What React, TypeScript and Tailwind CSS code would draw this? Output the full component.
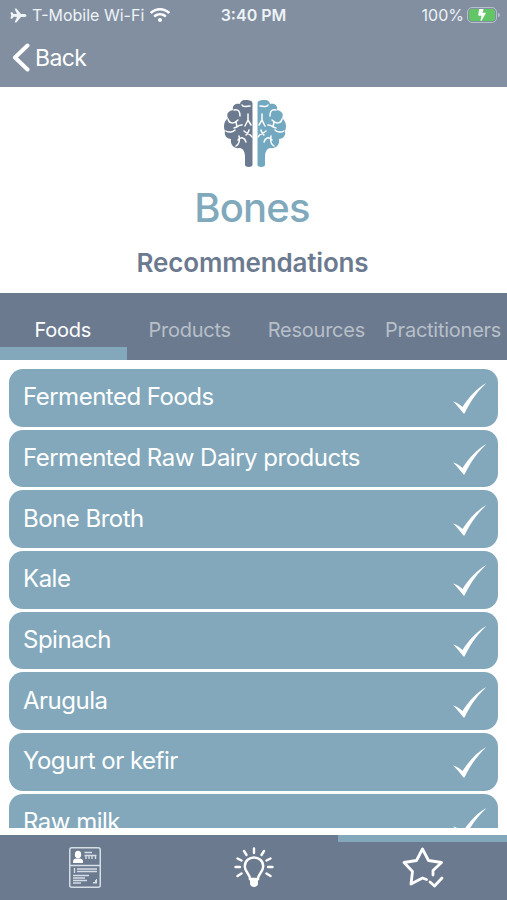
import { FaBolt, FaWifi } from "react-icons/fa";
import { IoAirplane } from "react-icons/io5";

const tabs = [
  { name: "Foods", active: true },
  { name: "Products", active: false },
  { name: "Resources", active: false },
  { name: "Practitioners", active: false },
];

const foods = [
  "Fermented Foods",
  "Fermented Raw Dairy products",
  "Bone Broth",
  "Kale",
  "Spinach",
  "Arugula",
  "Yogurt or kefir",
  "Raw milk",
];

const BrainHalf = () => (
  <>
    <path
      fill="currentColor"
      d="M28.500 3C28 0 24 0 21 0C18 0 16 2 16 4C11 3 8 6 9 10C4 11 2 14 4 18C0 21-1 27 1 31C0 36 3 39 7 39C6 45 10 49 16 48C20 49 21 53 21 57V65C21 67.500 28.500 67.500 28.500 65Z"
    />
    <path
      fill="none"
      stroke="white"
      strokeWidth="1.500"
      strokeLinecap="round"
      d="M18 5C19 8 23 6 26 6M10 10C15 9 16 12 16 16M4 19C5 24 10 24 14 20M10 28C13 28 15 24 18 25M12 22L13 27M2 31C5 33 9 32 11 30M24 14V20L21 26M24 20L27 25M28 37C26 33 23 34 20 31M22 35C24 34 24 33 25 30M14 40C17 36 21 38 22 42M12 46C15 44 16 40 15 36"
    />
  </>
);

const Brain = () => (
  <svg viewBox="0 0 62 67" className="h-[67px] w-[62px]">
    <g className="text-[#6c7a90]">
      <BrainHalf />
    </g>
    <g className="text-[#72a8c0]" transform="translate(62 0) scale(-1 1)">
      <BrainHalf />
    </g>
  </svg>
);

const Check = () => (
  <svg viewBox="0 0 34 32" className="mt-[3px] h-8 w-[34px]" fill="white">
    <path d="M0 18.500C3 19 7 21.500 9.500 24C16 14 24 5 33.500 0C25 8 18 17 11.500 30.500H10.500C7 26 4 22 0 18.500Z" />
  </svg>
);

const Article = () => (
  <svg viewBox="0 0 32 41" className="h-[41px] w-8" fill="none" stroke="#d5dde5">
    <rect x=".75" y=".75" width="30.5" height="39.500" rx="2" strokeWidth="1.500" />
    <path d="M1 18.500H31" strokeWidth="1.500" />
    <ellipse cx="9" cy="7.500" rx="3.200" ry="3.800" fill="white" stroke="none" />
    <path d="M4 16V14.500C4 12 6 11.500 9 11.500S14 12 14 14.500V16Z" fill="white" stroke="none" />
    <path d="M15.500 5.500H23M15.500 8.500H27.500M17 9V12M20 9V12M23 9V12M26.500 9V12M5.500 21V26M8 22H28M8 24.500H28M4 28.500H20M4 31H16M4 33.500H18M4 36H12" strokeWidth="1.400" />
    <path d="M28 32V36.500H24V35H26V33H27V32Z" fill="#d5dde5" stroke="none" />
  </svg>
);

const Bulb = () => (
  <svg viewBox="0 0 40 41" className="h-[41px] w-10" fill="none" stroke="white" strokeWidth="2.400" strokeLinecap="round">
    <path d="M16 32C16 27 10.800 25 10.800 19.500C10.800 7.500 29.200 7.500 29.200 19.500C29.200 25 24 27 24 32Z" />
    <path d="M16 32H24V37C24 38 22 40 20 40S16 38 16 37Z" fill="white" stroke="none" />
    <path d="M20 1.500V6M10 4L12.500 8M30 4L27.500 8M3.500 11.500L7.500 13.500M36.500 11.500L32.500 13.500M1.500 20H6M34 20H38.500M3.500 29L7.500 26.500M36.500 29L32.500 26.500" />
  </svg>
);

const Star = () => (
  <svg viewBox="0 0 42 41" className="h-[41px] w-[42px]" fill="none" stroke="white" strokeWidth="2.800" strokeLinejoin="round" strokeLinecap="round">
    <path d="M24.500 32.500L20.500 31L9 37L10.500 24.500L2 15.500L14.500 13.500L20.500 2L26.500 13.500L39.500 15.500L31 23.500V28" />
    <path d="M28 35L32.500 39L40 31" />
  </svg>
);

export default function App() {
  return (
    <div className="flex h-[900px] w-[507px] flex-col overflow-hidden bg-white font-[Inter,sans-serif]">
      <header className="h-[87px] shrink-0 bg-[#828fa1] text-white">
        <div className="grid h-[30px] grid-cols-3 items-center pr-[7px] pl-[10px] text-[16px] text-[#edf3f7]">
          <div className="flex items-center gap-[6px] whitespace-nowrap">
            <IoAirplane className="size-[17px]" />
            <span className="-ml-px">T-Mobile Wi-Fi</span>
            <FaWifi className="size-5 text-white" />
          </div>
          <span className="-ml-[3px] text-center font-semibold">3:40 PM</span>
          <div className="flex items-center justify-end gap-[3px]">
            <span>100%</span>
            <div className="flex items-center gap-px">
              <div className="flex h-[16px] w-[30px] rounded-[5px] border border-[#b6bfca] p-px">
                <div className="flex flex-1 items-center justify-center rounded-[3px] bg-[#63c666]">
                  <FaBolt className="size-3 text-white" />
                </div>
              </div>
              <div className="h-1 w-[2px] rounded-r bg-[#b6bfca]" />
            </div>
          </div>
        </div>
        <button className="flex h-[55px] items-center gap-[5px] pl-[12px] text-[23px] tracking-[-.6px]">
          <svg viewBox="0 0 18 29" className="h-[29px] w-[18px]" fill="none" stroke="white" strokeWidth="4" strokeLinecap="round" strokeLinejoin="round">
            <path d="M15.500 2.500L3 14.500L15.500 26.500" />
          </svg>
          <span className="pt-px">Back</span>
        </button>
      </header>

      <section className="flex h-[206px] shrink-0 flex-col items-center pt-[13px]">
        <div className="pl-[3px]">
          <Brain />
        </div>
        <h1 className="mt-[17px] pr-[3px] text-[40px] leading-[48px] font-medium tracking-[-.8px] text-[#81a9bc]">Bones</h1>
        <h2 className="mt-[15px] pr-[2px] text-[26px] leading-[32px] font-semibold tracking-[-.15px] text-[#6c7a90]">Recommendations</h2>
      </section>

      <nav className="grid h-[67px] shrink-0 grid-cols-4 bg-[#6c7a90] text-[20px] tracking-[-.25px]">
        {tabs.map((tab) => (
          <button
            key={tab.name}
            className={`flex items-center justify-center border-b-[13px] pt-[20px] pr-px ${
              tab.active ? "border-[#83a8bb] text-white" : "border-transparent text-[#b7bfc8]"
            }`}
          >
            {tab.name}
          </button>
        ))}
      </nav>

      <main className="h-[468px] shrink-0 overflow-hidden px-[9px] pt-[9px]">
        <ul className="flex flex-col gap-[3px]">
          {foods.map((food) => (
            <li
              key={food}
              className="flex h-[57.7px] shrink-0 items-center justify-between rounded-[14px] bg-[#83a8bb] pr-[11px] pl-[14px] text-[24px] tracking-[-.5px] text-white"
            >
              <span className="pb-px">{food}</span>
              <Check />
            </li>
          ))}
        </ul>
      </main>

      <footer className="mt-[7px] grid h-[65px] shrink-0 grid-cols-3 bg-[#6c7a90]">
        <button className="flex justify-center pt-[12px]"><Article /></button>
        <button className="flex justify-center pt-[12px]"><Bulb /></button>
        <button className="flex justify-center border-t-[7px] border-[#83a8bb] pt-[5px]"><Star /></button>
      </footer>
    </div>
  );
}
